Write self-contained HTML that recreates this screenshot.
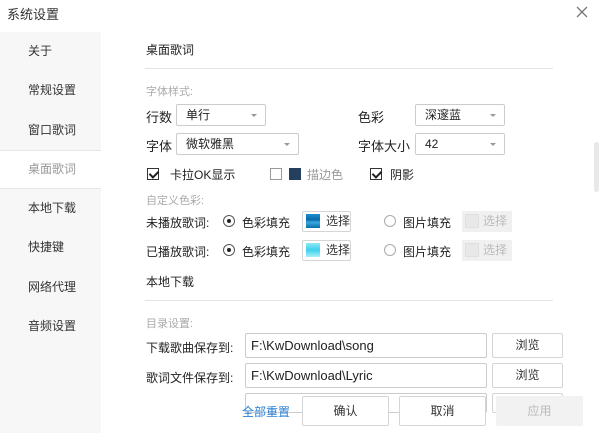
<!DOCTYPE html>
<html><head><meta charset="utf-8"><style>
*{margin:0;padding:0;box-sizing:border-box}
body{width:600px;height:433px;overflow:hidden;background:#fff;position:relative;font-family:"Liberation Sans","Microsoft YaHei","Noto Sans CJK SC",sans-serif;font-size:12px;color:#222}
.a{position:absolute;white-space:nowrap}
.side{position:absolute;left:0;top:32px;width:101px;height:401px;background:#f7f7f7}
.si{position:absolute;left:28px;font-size:12px;color:#333;line-height:14px}
.sel{position:absolute;left:0;top:150px;width:101px;height:39px;background:#fff;border-top:1px solid #e6e6e6;border-bottom:1px solid #e6e6e6}
.gray{color:#aaa;font-size:11px}
.box{position:absolute;border:1px solid #ccc;background:#fff;border-radius:2px;padding-left:9px;font-size:12px;line-height:20px;white-space:nowrap}
.box .ar{position:absolute;right:8px;top:9px;width:0;height:0;border-left:3px solid transparent;border-right:3px solid transparent;border-top:3px solid #999}
.btn{position:absolute;border:1px solid #d5d5d5;background:#fff;border-radius:2px;text-align:center;color:#333;white-space:nowrap}
.cb{position:absolute;width:12px;height:12px;border:1px solid #333;background:#fff}
.cb:after{content:"";position:absolute;left:3px;top:0px;width:4px;height:7px;border:solid #222;border-width:0 2px 2px 0;transform:rotate(45deg)}
.rd{position:absolute;width:12px;height:12px;border:1px solid #555;border-radius:50%}
.rd.on:after{content:"";position:absolute;left:3px;top:3px;width:4px;height:4px;border-radius:50%;background:#222}
.rd.off{border-color:#aaa}
.line{position:absolute;left:145px;width:408px;height:1px;background:#e3e3e3}
</style></head><body>
<div class="a" style="left:7px;top:4px;font-size:13px;color:#333">系统设置</div>
<svg class="a" style="left:576px;top:6px" width="12" height="12"><path d="M1 1L11 11M11 1L1 11" stroke="#777" stroke-width="1.3"/></svg>
<div class="side"></div>
<div class="sel"></div>
<div class="si" style="top:44px">关于</div>
<div class="si" style="top:83px">常规设置</div>
<div class="si" style="top:123px">窗口歌词</div>
<div class="si" style="top:162px;color:#999">桌面歌词</div>
<div class="si" style="top:201px">本地下载</div>
<div class="si" style="top:240px">快捷键</div>
<div class="si" style="top:280px">网络代理</div>
<div class="si" style="top:319px">音频设置</div>
<div style="position:absolute;left:594px;top:142px;width:5px;height:50px;background:#e8e8e8;border-radius:3px"></div>

<div class="a" style="left:146px;top:41px">桌面歌词</div>
<div class="line" style="top:68px"></div>
<div class="a gray" style="left:146px;top:83px">字体样式:</div>
<div class="a" style="left:146px;top:107px;font-size:13px">行数</div>
<div class="box" style="left:176px;top:104px;width:90px;height:22px">单行<span class="ar"></span></div>
<div class="a" style="left:358px;top:107px;font-size:13px">色彩</div>
<div class="box" style="left:415px;top:104px;width:90px;height:22px">深邃蓝<span class="ar"></span></div>
<div class="a" style="left:146px;top:136px;font-size:13px">字体</div>
<div class="box" style="left:176px;top:133px;width:123px;height:22px">微软雅黑<span class="ar"></span></div>
<div class="a" style="left:358px;top:136px;font-size:13px">字体大小</div>
<div class="box" style="left:415px;top:133px;width:90px;height:22px">42<span class="ar"></span></div>

<div class="cb" style="left:147px;top:168px"></div>
<div class="a" style="left:170px;top:166px;font-size:12px">卡拉OK显示</div>
<div class="a" style="left:270px;top:168px;width:12px;height:12px;border:1px solid #999"></div>
<div class="a" style="left:289px;top:168px;width:12px;height:12px;background:#24405e"></div>
<div class="a" style="left:307px;top:166px;color:#999">描边色</div>
<div class="cb" style="left:370px;top:168px"></div>
<div class="a" style="left:390px;top:166px">阴影</div>

<div class="a gray" style="left:146px;top:192px">自定义色彩:</div>
<div class="a" style="left:146px;top:214px">未播放歌词:</div>
<div class="rd on" style="left:223px;top:215px"></div>
<div class="a" style="left:242px;top:214px">色彩填充</div>
<div class="btn" style="left:302px;top:211px;width:49px;height:21px;text-align:left;padding-left:23px;line-height:19px">选择</div>
<div class="a" style="left:306px;top:214px;width:14px;height:14px;background:linear-gradient(#1a8fd0,#0a6aa8 40%,#3aa9e0 60%,#0a6aa8)"></div>
<div class="rd off" style="left:384px;top:215px"></div>
<div class="a" style="left:403px;top:214px">图片填充</div>
<div class="a" style="left:462px;top:211px;width:50px;height:21px;background:#f0f0f0;color:#bbb;padding-left:21px;line-height:21px">选择</div>
<div class="a" style="left:465px;top:214px;width:14px;height:14px;background:#e8e8e8;border:1px solid #e0e0e0"></div>

<div class="a" style="left:146px;top:243px">已播放歌词:</div>
<div class="rd on" style="left:223px;top:244px"></div>
<div class="a" style="left:242px;top:243px">色彩填充</div>
<div class="btn" style="left:302px;top:240px;width:49px;height:21px;text-align:left;padding-left:23px;line-height:19px">选择</div>
<div class="a" style="left:306px;top:243px;width:14px;height:14px;background:linear-gradient(#8fe8f5,#3fd0ec 50%,#a8f0fa)"></div>
<div class="rd off" style="left:384px;top:244px"></div>
<div class="a" style="left:403px;top:243px">图片填充</div>
<div class="a" style="left:462px;top:240px;width:50px;height:21px;background:#f0f0f0;color:#bbb;padding-left:21px;line-height:21px">选择</div>
<div class="a" style="left:465px;top:243px;width:14px;height:14px;background:#e8e8e8;border:1px solid #e0e0e0"></div>

<div class="a" style="left:146px;top:273px">本地下载</div>
<div class="line" style="top:300px"></div>
<div class="a gray" style="left:146px;top:315px">目录设置:</div>
<div class="a" style="left:146px;top:339px">下载歌曲保存到:</div>
<div class="box" style="left:245px;top:333px;width:242px;height:25px;line-height:23px;padding-left:5px;font-size:13px">F:\KwDownload\song</div>
<div class="btn" style="left:492px;top:333px;width:71px;height:25px;line-height:23px">浏览</div>
<div class="a" style="left:146px;top:369px">歌词文件保存到:</div>
<div class="box" style="left:245px;top:363px;width:242px;height:25px;line-height:23px;padding-left:5px;font-size:13px">F:\KwDownload\Lyric</div>
<div class="btn" style="left:492px;top:363px;width:71px;height:25px;line-height:23px">浏览</div>
<div class="box" style="left:245px;top:393px;width:242px;height:20px"></div>
<div class="btn" style="left:492px;top:393px;width:71px;height:20px"></div>

<div class="a" style="left:242px;top:403px;color:#2a7fd4">全部重置</div>
<div class="btn" style="left:302px;top:396px;width:87px;height:30px;line-height:28px">确认</div>
<div class="btn" style="left:399px;top:396px;width:87px;height:30px;line-height:28px">取消</div>
<div class="a" style="left:496px;top:396px;width:87px;height:30px;line-height:30px;background:#f2f2f2;color:#bbb;text-align:center;border-radius:2px">应用</div>
</body></html>
